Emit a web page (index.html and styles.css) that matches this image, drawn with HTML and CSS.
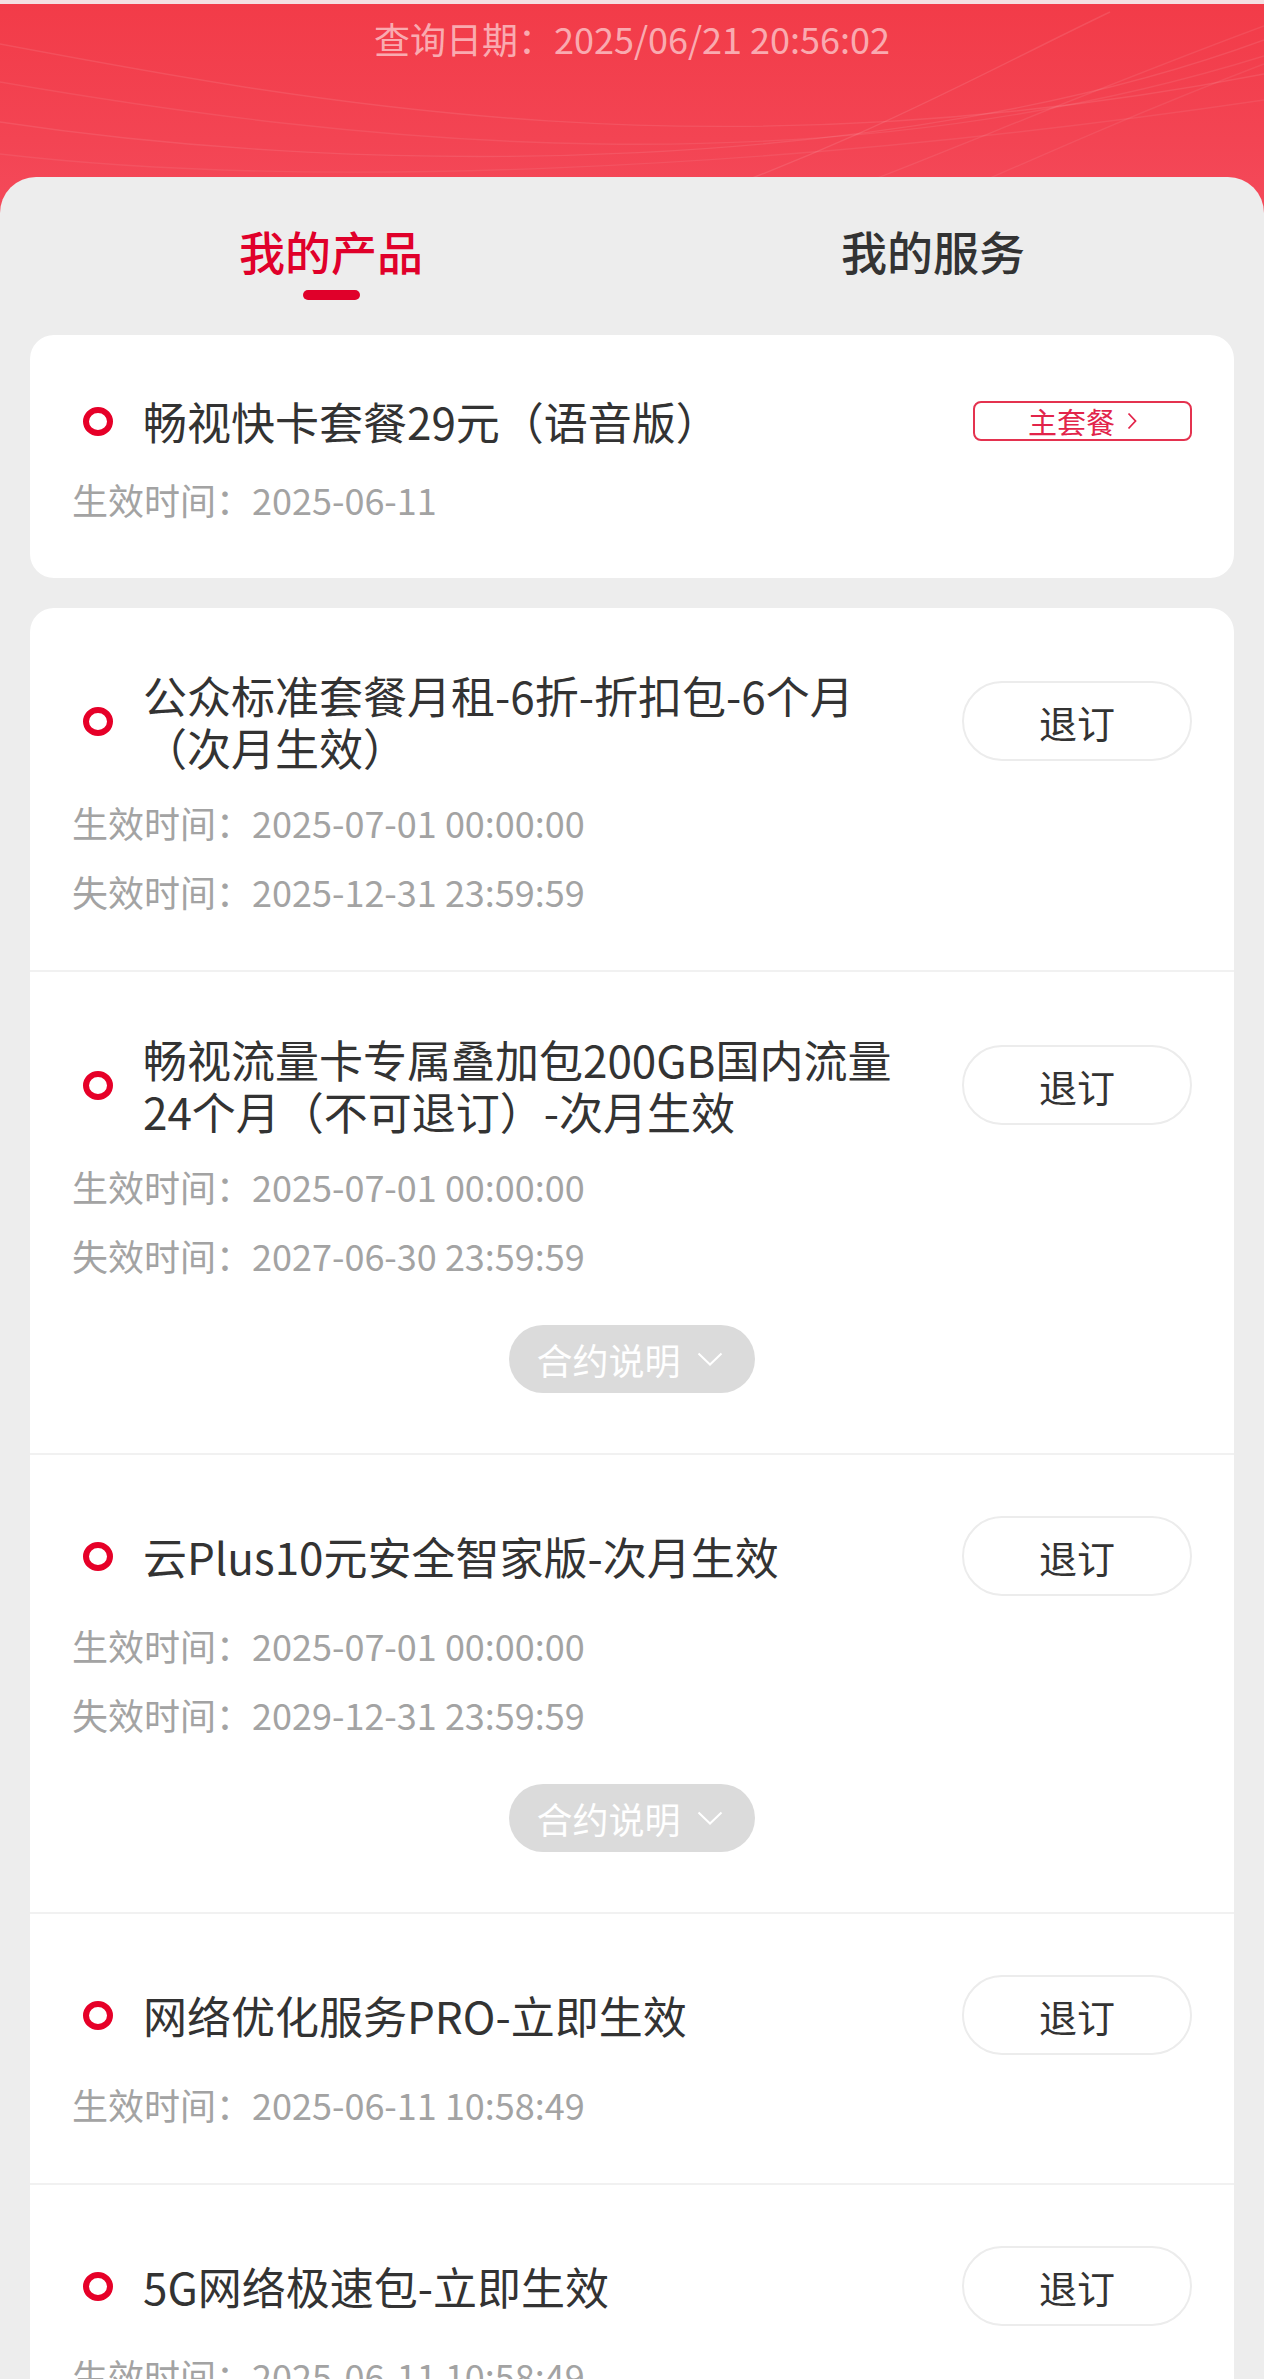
FILE: index.html
```html
<!DOCTYPE html>
<html lang="zh-CN">
<head>
<meta charset="utf-8">
<title>我的产品</title>
<link rel="stylesheet" href="styles.css">
</head>
<body>
<div class="page">
  <header class="header">
    <svg class="swirl" viewBox="0 0 1264 240" preserveAspectRatio="none" aria-hidden="true">
      <g fill="none" stroke="#ffffff" stroke-width="1.4">
        <path d="M0,40 C320,100 720,175 1264,70" opacity="0.09"/>
        <path d="M0,78 C360,140 820,190 1264,52" opacity="0.08"/>
        <path d="M0,118 C380,175 900,170 1264,36" opacity="0.09"/>
        <path d="M0,150 C300,185 760,170 1264,96" opacity="0.07"/>
        <path d="M1110,8 C980,70 860,140 640,215" opacity="0.10"/>
        <path d="M1264,22 C1080,90 920,160 720,235" opacity="0.08"/>
        <path d="M1264,60 C1120,115 1000,170 840,240" opacity="0.07"/>
      </g>
    </svg>
    <p class="query-date">查询日期：2025/06/21 20:56:02</p>
  </header>

  <main class="panel">
    <nav class="tabs">
      <div class="tab tab-active">
        <span class="tab-label">我的产品</span>
        <span class="tab-bar"></span>
      </div>
      <div class="tab">
        <span class="tab-label">我的服务</span>
        <span class="tab-bar"></span>
      </div>
    </nav>

    <section class="card card-main">
      <div class="item item-main">
        <div class="row">
          <span class="bullet"></span>
          <span class="title">畅视快卡套餐29元（语音版）</span>
          <span class="badge">主套餐<svg class="badge-arrow" viewBox="0 0 10 18"><path d="M1.5,1.5 L8.5,9 L1.5,16.5" fill="none" stroke="currentColor" stroke-width="1.8"/></svg></span>
        </div>
        <p class="meta">生效时间：2025-06-11</p>
      </div>
    </section>

    <section class="card card-list">
      <div class="item">
        <div class="row">
          <span class="bullet"></span>
          <span class="title">公众标准套餐月租-6折-折扣包-6个月（次月生效）</span>
          <button class="btn">退订</button>
        </div>
        <p class="meta">生效时间：2025-07-01 00:00:00</p>
        <p class="meta">失效时间：2025-12-31 23:59:59</p>
      </div>

      <div class="item">
        <div class="row">
          <span class="bullet"></span>
          <span class="title">畅视流量卡专属叠加包200GB国内流量24个月（不可退订）-次月生效</span>
          <button class="btn">退订</button>
        </div>
        <p class="meta">生效时间：2025-07-01 00:00:00</p>
        <p class="meta">失效时间：2027-06-30 23:59:59</p>
        <div class="pill-wrap">
          <span class="pill">合约说明<svg class="pill-arrow" viewBox="0 0 26 14"><path d="M1.5,1.5 L13,12.5 L24.5,1.5" fill="none" stroke="currentColor" stroke-width="2"/></svg></span>
        </div>
      </div>

      <div class="item">
        <div class="row">
          <span class="bullet"></span>
          <span class="title">云Plus10元安全智家版-次月生效</span>
          <button class="btn">退订</button>
        </div>
        <p class="meta">生效时间：2025-07-01 00:00:00</p>
        <p class="meta">失效时间：2029-12-31 23:59:59</p>
        <div class="pill-wrap">
          <span class="pill">合约说明<svg class="pill-arrow" viewBox="0 0 26 14"><path d="M1.5,1.5 L13,12.5 L24.5,1.5" fill="none" stroke="currentColor" stroke-width="2"/></svg></span>
        </div>
      </div>

      <div class="item">
        <div class="row">
          <span class="bullet"></span>
          <span class="title">网络优化服务PRO-立即生效</span>
          <button class="btn">退订</button>
        </div>
        <p class="meta">生效时间：2025-06-11 10:58:49</p>
      </div>

      <div class="item">
        <div class="row">
          <span class="bullet"></span>
          <span class="title">5G网络极速包-立即生效</span>
          <button class="btn">退订</button>
        </div>
        <p class="meta">生效时间：2025-06-11 10:58:49</p>
      </div>
    </section>
  </main>
</div>
</body>
</html>
```

FILE: styles.css
```css
* {
  box-sizing: border-box;
}

html, body {
  margin: 0;
  padding: 0;
}

body {
  font-family: "Noto Sans CJK SC", "Noto Sans", "Liberation Sans", sans-serif;
  background: #ededed;
  color: #333333;
}

.page {
  width: 1264px;
  background: linear-gradient(180deg, #f23b48 0px, #f34453 140px, #f54c5d 240px, #ededed 240px);
}

.header {
  position: relative;
  height: 177px;
  border-top: 4px solid #f4dfe1;
  overflow: hidden;
}

.swirl {
  position: absolute;
  left: 0;
  top: 0;
  width: 1264px;
  height: 240px;
}

.query-date {
  position: relative;
  margin: 0;
  text-align: center;
  font-size: 36px;
  line-height: 68px;
  color: rgba(255, 255, 255, 0.58);
}

.panel {
  background: #ededed;
  border-radius: 36px 36px 0 0;
  padding: 43px 30px 0;
}

.tabs {
  display: grid;
  grid-template-columns: 1fr 1fr;
}

.tab {
  display: flex;
  flex-direction: column;
  align-items: center;
}

.tab-label {
  font-size: 46px;
  line-height: 60px;
  font-weight: 500;
  color: #333333;
}

.tab-bar {
  width: 57px;
  height: 10px;
  margin-top: 10px;
  border-radius: 5px;
  background: transparent;
}

.tab-active .tab-label {
  color: #e0002a;
}

.tab-active .tab-bar {
  background: #e0002a;
}

.card {
  background: #ffffff;
  border-radius: 24px;
  overflow: hidden;
}

.card-main {
  margin-top: 35px;
}

.card-list {
  margin-top: 30px;
}

.item {
  padding: 61px 42px 44px 42px;
}

.item + .item {
  border-top: 2px solid #f1f1f1;
}

.item-main {
  padding-top: 60px;
}

.row {
  display: flex;
  align-items: center;
  min-height: 80px;
}

.item-main .row {
  min-height: 52px;
}

.bullet {
  flex: none;
  width: 30px;
  height: 29px;
  margin-left: 11px;
  margin-right: 30px;
  border: 6px solid #e60028;
  border-radius: 50%;
}

.title {
  flex: 1;
  min-width: 0;
  font-size: 44px;
  line-height: 52px;
  color: #333333;
}

.btn {
  flex: none;
  width: 230px;
  height: 80px;
  margin-left: 46px;
  border: 2px solid #ececec;
  border-radius: 40px;
  background: #ffffff;
  font-family: inherit;
  font-size: 38px;
  color: #333333;
  padding: 0;
}

.badge {
  flex: none;
  display: flex;
  align-items: center;
  justify-content: center;
  gap: 12px;
  width: 219px;
  height: 40px;
  margin-left: 30px;
  border: 2px solid #e4324f;
  border-radius: 8px;
  font-size: 29px;
  line-height: 36px;
  color: #e2244a;
}

.badge-arrow {
  width: 10px;
  height: 18px;
}

.meta {
  margin: 0;
  font-size: 36px;
  line-height: 69px;
  color: #a3a3a3;
}

.row + .meta {
  margin-top: 15px;
}

.item-main .row + .meta {
  margin-top: 18px;
}

.pill-wrap {
  display: flex;
  justify-content: center;
  margin-top: 35px;
  margin-bottom: 16px;
}

.pill {
  display: flex;
  align-items: center;
  gap: 16px;
  height: 68px;
  padding: 0 32px 0 27px;
  border-radius: 34px;
  background: #dbdbdb;
  color: #ffffff;
  font-size: 36px;
}

.pill-arrow {
  width: 26px;
  height: 14px;
}
```
